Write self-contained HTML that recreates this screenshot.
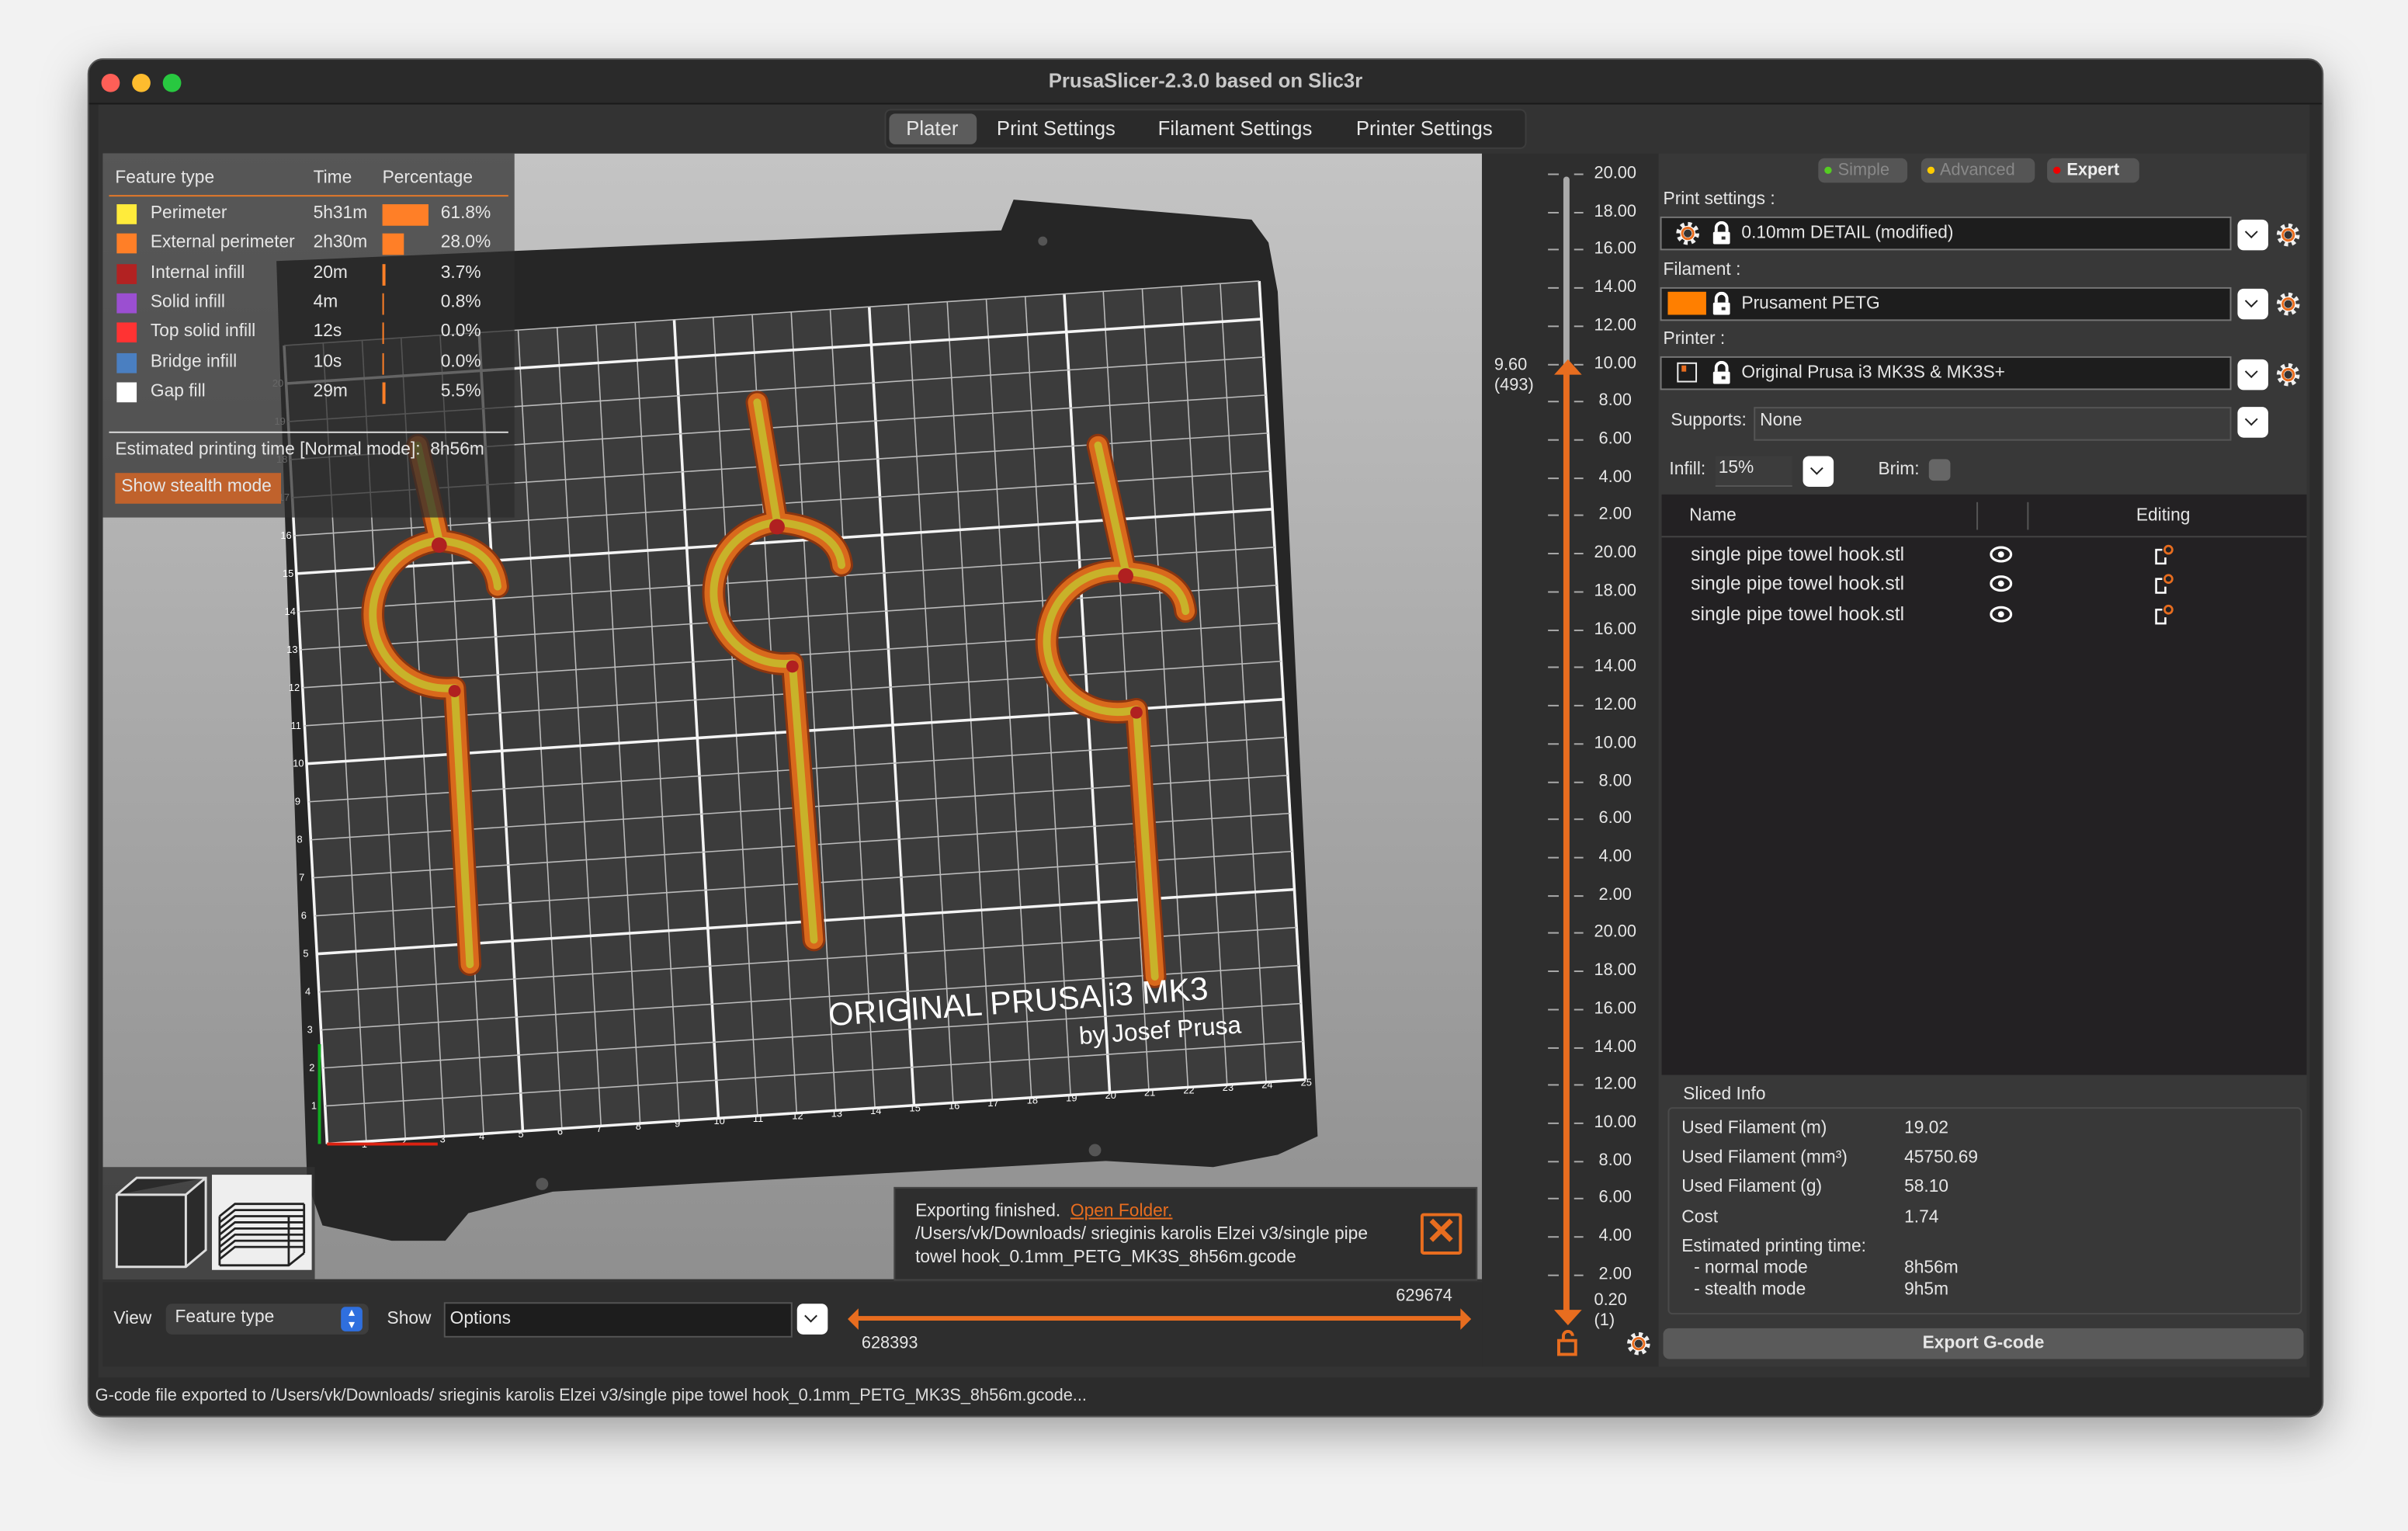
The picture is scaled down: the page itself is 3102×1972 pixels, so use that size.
<!DOCTYPE html>
<html><head><meta charset="utf-8"><style>
html,body{margin:0;padding:0;width:3102px;height:1972px;overflow:hidden;background:#f2f2f2;}
#w{position:absolute;left:0;top:0;width:1568px;height:997px;transform-origin:0 0;transform:scale(1.97832,1.97793);font-family:"Liberation Sans",sans-serif;color:#e6e6e6;font-size:11.5px;}
.a{position:absolute;white-space:nowrap;}
.win{position:absolute;left:57px;top:38px;width:1454px;height:883px;background:#2c2c2c;border-radius:10px;box-shadow:0 10px 30px rgba(0,0,0,.35);overflow:hidden;border:1px solid #555;}
.combo{position:absolute;background:#1d1d1d;border:1px solid #777;height:20px;}
.dd{position:absolute;width:20px;height:20px;background:#fff;border-radius:4px;}
.dd:after{content:"";position:absolute;left:6px;top:5px;width:5px;height:5px;border-right:1.6px solid #222;border-bottom:1.6px solid #222;transform:rotate(45deg);}
.sw{position:absolute;width:13px;height:13px;}
</style></head><body>
<div id="w">
<div class="win">
 <div class="a" style="left:0;top:0;width:1454px;height:28px;background:#2a2a2a;border-bottom:1px solid #1a1a1a"></div>
 <div class="a" style="left:8px;top:9px;width:12px;height:12px;border-radius:50%;background:#fe5f57"></div>
 <div class="a" style="left:28px;top:9px;width:12px;height:12px;border-radius:50%;background:#febc2e"></div>
 <div class="a" style="left:48px;top:9px;width:12px;height:12px;border-radius:50%;background:#28c840"></div>
 <div class="a" style="left:0;width:1454px;top:6px;text-align:center;font-weight:bold;font-size:13px;color:#c8c8c8">PrusaSlicer-2.3.0 based on Slic3r</div>
 <div class="a" style="left:6px;top:29px;width:1440px;height:830px;background:#333;"></div>
 <div class="a" style="left:518px;top:32px;width:416px;height:24px;background:#2a2a2a;border-radius:4px;border:1px solid #3d3d3d"></div>
 <div class="a" style="left:521px;top:35px;width:57px;height:20px;background:#5c5c5c;border-radius:4px"></div>
 <div class="a" style="left:532px;top:37px;font-size:13px">Plater</div>
 <div class="a" style="left:591px;top:37px;font-size:13px">Print Settings</div>
 <div class="a" style="left:696px;top:37px;font-size:13px">Filament Settings</div>
 <div class="a" style="left:825px;top:37px;font-size:13px">Printer Settings</div>
</div>

<div class="a" style="left:67px;top:100px;width:898px;height:733px;background:linear-gradient(#c4c4c4,#8f8f8f);overflow:hidden">
<svg width="898" height="733" viewBox="67 100 898 733" style="position:absolute;left:0;top:0">
 <polygon points="180,170 652,150 660,130 815,143 826,158 832,190 858,740 832,752 790,760 720,756 360,776 305,790 290,808 255,808 210,798 200,770" fill="#262626"/>
 <g id="grid"></g>
 <g id="hooks"></g>
 <text x="540" y="668" fill="#fff" font-size="21" font-family="Liberation Sans" transform="rotate(-4 540 668)">ORIGINAL PRUSA i3 MK3</text>
 <text x="703" y="680" fill="#fff" font-size="16" font-family="Liberation Sans" transform="rotate(-4 703 680)">by Josef Prusa</text>
 <line x1="213" y1="745" x2="285" y2="745" stroke="#d21" stroke-width="2"/>
 <line x1="208" y1="745" x2="208" y2="680" stroke="#1a2" stroke-width="2"/>
 <circle cx="713" cy="749" r="4" fill="#555"/><circle cx="353" cy="771" r="4" fill="#555"/><circle cx="679" cy="157" r="3" fill="#555"/>
</svg>
</div>
<div class="a" style="left:67px;top:100px;width:268px;height:237px;background:rgba(45,45,45,.72)"></div>
<div class="a" style="left:75px;top:110px">Feature type</div>
<div class="a" style="left:204px;top:110px">Time</div>
<div class="a" style="left:249px;top:110px">Percentage</div>
<div class="a" style="left:71px;top:127px;width:260px;height:1px;background:#e67a2a"></div>
<div id="leg"></div>
<div class="a" style="left:71px;top:281px;width:260px;height:1px;background:#ddd"></div>
<div class="a" style="left:75px;top:287px">Estimated printing time [Normal mode]:&nbsp; 8h56m</div>
<div class="a" style="left:75px;top:308px;width:108px;height:20px;background:#c0622c"></div>
<div class="a" style="left:79px;top:311px">Show stealth mode</div>
<div class="a" style="left:67px;top:760px;width:138px;height:73px;background:rgba(50,50,50,.8)"></div>
<svg class="a" style="left:73px;top:764px" width="132" height="64">
 <path d="M3 14 L16 3 L61 3 L61 50 L48 61 L3 61Z M3 14 L48 14 L61 3 M48 14 L48 61" fill="#2b2b2b" stroke="#ddd" stroke-width="1.5"/>
 <rect x="65" y="1" width="65" height="62" fill="#eee"/>
 <g stroke="#222" stroke-width="1.4" fill="none">
  <path d="M70 48 L80 40 L125 40 M70 52 L80 44 L125 44 M70 56 L80 48 L125 48 M70 60 L115 60 L125 52 M70 44 L80 36 L125 36 M70 40 L80 32 L125 32 M70 36 L80 28 L125 28 M70 32 L80 24 L125 24 M70 28 L80 20 L125 20"/>
  <path d="M70 28 L70 60 M115 28 L115 60 M125 20 L125 52"/>
 </g>
</svg>
<div class="a" style="left:582px;top:773px;width:378px;height:59px;background:#2e2e2e;border:1px solid #444"></div>
<div class="a" style="left:596px;top:783px">Exporting finished. &nbsp;<span style="color:#e86d1f;text-decoration:underline">Open Folder.</span></div>
<div class="a" style="left:596px;top:798px">/Users/vk/Downloads/ srieginis karolis Elzei v3/single pipe</div>
<div class="a" style="left:596px;top:813px">towel hook_0.1mm_PETG_MK3S_8h56m.gcode</div>
<div class="a" style="left:925px;top:790px;width:23px;height:23px;border:2px solid #e86d1f;border-radius:2px;color:#e86d1f;font-size:24px;line-height:22px;text-align:center;font-weight:bold">✕</div>

<div class="a" style="left:965px;top:100px;width:115px;height:790px;background:#2e2e2e"></div>
<div class="a" style="left:1018px;top:115px;width:4px;height:125px;background:#aaa;border-radius:2px"></div>
<div class="a" style="left:1018px;top:240px;width:4px;height:616px;background:#e86d1f;border-radius:2px"></div>
<svg class="a" style="left:1010px;top:232px" width="22" height="16"><path d="M2 12 L11 2 L20 12Z" fill="#e86d1f"/></svg>
<svg class="a" style="left:1010px;top:850px" width="22" height="16"><path d="M2 3 L11 13 L20 3Z" fill="#e86d1f"/></svg>
<div class="a" style="left:973px;top:232px;font-size:11px">9.60</div>
<div class="a" style="left:973px;top:245px;font-size:11px">(493)</div>
<div id="vs"></div>
<div class="a" style="left:1038px;top:841px;font-size:11px">0.20</div>
<div class="a" style="left:1038px;top:854px;font-size:11px">(1)</div>
<svg class="a" style="left:1013px;top:866px" width="16" height="17"><rect x="2" y="7" width="11" height="9" fill="none" stroke="#e86d1f" stroke-width="2"/><path d="M5 7 V4 a3 3 0 0 1 6 0" fill="none" stroke="#e86d1f" stroke-width="2"/></svg>
<div class="a gear" style="left:1059px;top:867px"></div>

<div class="a" style="left:67px;top:835px;width:898px;height:55px;background:#2e2e2e"></div>
<div class="a" style="left:74px;top:853px">View</div>
<div class="a" style="left:108px;top:849px;width:132px;height:20px;background:#3e3e3e;border-radius:4px"></div>
<div class="a" style="left:114px;top:852px">Feature type</div>
<div class="a" style="left:222px;top:851px;width:14px;height:16px;background:#2f6fde;border-radius:3px;color:#fff;font-size:8px;text-align:center;line-height:8px">▴<br>▾</div>
<div class="a" style="left:252px;top:853px">Show</div>
<div class="a" style="left:289px;top:848px;width:225px;height:21px;background:#1d1d1d;border:1px solid #555"></div>
<div class="a" style="left:293px;top:853px">Options</div>
<div class="dd" style="left:519px;top:849px"></div>
<div class="a" style="left:556px;top:857px;width:400px;height:3px;background:#e86d1f"></div>
<svg class="a" style="left:550px;top:851px" width="410" height="16"><path d="M2 8 L9 1 V15Z M408 8 L401 1 V15Z" fill="#e86d1f"/></svg>
<div class="a" style="left:909px;top:838px;font-size:11px">629674</div>
<div class="a" style="left:561px;top:869px;font-size:11px">628393</div>

<div class="a" style="left:1080px;top:100px;width:422px;height:790px;background:#383838"></div>
<div class="a" style="left:1184px;top:103px;width:58px;height:16px;background:#555;border-radius:4px;color:#888;font-size:11px;line-height:16px">&nbsp;<span style="color:#5c2">●</span> Simple</div>
<div class="a" style="left:1251px;top:103px;width:74px;height:16px;background:#555;border-radius:4px;color:#888;font-size:11px;line-height:16px">&nbsp;<span style="color:#fc0">●</span> Advanced</div>
<div class="a" style="left:1333px;top:103px;width:60px;height:16px;background:#555;border-radius:4px;color:#eee;font-weight:bold;font-size:11px;line-height:16px">&nbsp;<span style="color:#e00">●</span> Expert</div>
<div class="a" style="left:1083px;top:124px">Print settings :</div>
<div class="combo" style="left:1081px;top:141px;width:370px"></div>
<div class="a gear" style="left:1091px;top:144px"></div>
<div class="a lock" style="left:1114px;top:144px"></div>
<div class="a" style="left:1134px;top:146px">0.10mm DETAIL (modified)</div>
<div class="dd" style="left:1457px;top:143px"></div><div class="a gear" style="left:1482px;top:145px"></div>
<div class="a" style="left:1083px;top:170px">Filament :</div>
<div class="combo" style="left:1081px;top:187px;width:370px"></div>
<div class="a" style="left:1086px;top:190px;width:25px;height:15px;background:#ff7f00"></div>
<div class="a lock" style="left:1114px;top:190px"></div>
<div class="a" style="left:1134px;top:192px">Prusament PETG</div>
<div class="dd" style="left:1457px;top:188px"></div><div class="a gear" style="left:1482px;top:190px"></div>
<div class="a" style="left:1083px;top:215px">Printer :</div>
<div class="combo" style="left:1081px;top:232px;width:370px"></div>
<div class="a" style="left:1092px;top:236px;width:13px;height:13px;border:1.5px solid #eee;box-sizing:border-box"></div>
<div class="a" style="left:1095px;top:238px;width:3px;height:4px;background:#e86d1f"></div>
<div class="a lock" style="left:1114px;top:235px"></div>
<div class="a" style="left:1134px;top:237px">Original Prusa i3 MK3S &amp; MK3S+</div>
<div class="dd" style="left:1457px;top:234px"></div><div class="a gear" style="left:1482px;top:236px"></div>
<div class="a" style="left:1088px;top:268px">Supports:</div>
<div class="a" style="left:1142px;top:265px;width:309px;height:20px;background:#3c3c3c;border:1px solid #555"></div>
<div class="a" style="left:1146px;top:268px">None</div>
<div class="dd" style="left:1457px;top:265px"></div>
<div class="a" style="left:1087px;top:300px">Infill:</div>
<div class="a" style="left:1117px;top:297px;width:50px;height:19px;background:#3c3c3c;border-bottom:1px solid #555"></div>
<div class="a" style="left:1119px;top:299px">15%</div>
<div class="dd" style="left:1174px;top:297px"></div>
<div class="a" style="left:1223px;top:300px">Brim:</div>
<div class="a" style="left:1256px;top:299px;width:14px;height:14px;background:#666;border-radius:3px"></div>
<div class="a" style="left:1082px;top:322px;width:420px;height:378px;background:#232123"></div>
<div class="a" style="left:1100px;top:330px">Name</div>
<div class="a" style="left:1287px;top:327px;width:1px;height:18px;background:#555"></div>
<div class="a" style="left:1320px;top:327px;width:1px;height:18px;background:#555"></div>
<div class="a" style="left:1391px;top:330px">Editing</div>
<div class="a" style="left:1082px;top:349px;width:420px;height:1px;background:#444"></div>
<div id="rows"></div>
<div class="a" style="left:1096px;top:707px">Sliced Info</div>
<div class="a" style="left:1086px;top:721px;width:411px;height:133px;border:1px solid #4a4a4a;border-radius:3px"></div>
<div class="a" style="left:1095px;top:729px">Used Filament (m)</div><div class="a" style="left:1240px;top:729px">19.02</div>
<div class="a" style="left:1095px;top:748px">Used Filament (mm³)</div><div class="a" style="left:1240px;top:748px">45750.69</div>
<div class="a" style="left:1095px;top:767px">Used Filament (g)</div><div class="a" style="left:1240px;top:767px">58.10</div>
<div class="a" style="left:1095px;top:787px">Cost</div><div class="a" style="left:1240px;top:787px">1.74</div>
<div class="a" style="left:1095px;top:806px">Estimated printing time:</div>
<div class="a" style="left:1103px;top:820px">- normal mode</div><div class="a" style="left:1240px;top:820px">8h56m</div>
<div class="a" style="left:1103px;top:834px">- stealth mode</div><div class="a" style="left:1240px;top:834px">9h5m</div>
<div class="a" style="left:1083px;top:865px;width:417px;height:20px;background:#5a5a5a;border-radius:4px;text-align:center;line-height:20px;font-weight:bold">Export G-code</div>
<div class="a" style="left:58px;top:897px;width:1452px;height:23px;background:#2c2c2c;border-radius:0 0 10px 10px"></div>
<div class="a" style="left:62px;top:903px;font-size:11px;color:#ddd">G-code file exported to /Users/vk/Downloads/ srieginis karolis Elzei v3/single pipe towel hook_0.1mm_PETG_MK3S_8h56m.gcode...</div>
</div>
<script>
function P(u,v){var TL=[185,225],TR=[820,183],BR=[850,703],BL=[213,745];
var x=(1-u)*(1-v)*TL[0]+u*(1-v)*TR[0]+u*v*BR[0]+(1-u)*v*BL[0];
var y=(1-u)*(1-v)*TL[1]+u*(1-v)*TR[1]+u*v*BR[1]+(1-u)*v*BL[1];return [x,y];}
var g=document.getElementById('grid'),s='';
s+='<polygon points="185,225 820,183 850,703 213,745" fill="#3c3c3c"/>';
for(var i=0;i<=25;i++){var t=i/25,a=P(t,0),b=P(t,1);var w=(i%5==0)?1.8:0.8,col=(i%5==0)?'#f4f4f4':'#bbb';
s+='<line x1="'+a[0]+'" y1="'+a[1]+'" x2="'+b[0]+'" y2="'+b[1]+'" stroke="'+col+'" stroke-width="'+w+'"/>';
if(i>0){var q=P(t,1);s+='<text x="'+(q[0]-3)+'" y="'+(q[1]+4)+'" font-size="6.5" fill="#fff" font-family="Liberation Sans">'+i+'</text>';}}
for(var j=0;j<=21;j++){var t=j/21,c=P(0,1-t),d=P(1,1-t);var w=(j%5==0)?1.8:0.8,col=(j%5==0)?'#f4f4f4':'#bbb';
s+='<line x1="'+c[0]+'" y1="'+c[1]+'" x2="'+d[0]+'" y2="'+d[1]+'" stroke="'+col+'" stroke-width="'+w+'"/>';
if(j>0&&j<21){s+='<text x="'+(c[0]-9)+'" y="'+(c[1]+2)+'" font-size="6.5" fill="#fff" font-family="Liberation Sans">'+j+'</text>';}}
g.innerHTML=s;
function hook(top,f,jn,tip,bot){var d='M'+top[0]+' '+top[1]+' L'+f[0]+' '+f[1]+' A 46 46 0 1 0 '+jn[0]+' '+jn[1]+' L'+bot[0]+' '+bot[1]+' M'+f[0]+' '+f[1]+' C'+(f[0]+22)+' '+(f[1]+2)+' '+(tip[0]-2)+' '+(tip[1]-18)+' '+tip[0]+' '+tip[1];
return '<path d="'+d+'" fill="none" stroke="#8a3510" stroke-width="15" stroke-linecap="round" stroke-linejoin="round"/><path d="'+d+'" fill="none" stroke="#d9691c" stroke-width="12" stroke-linecap="round" stroke-linejoin="round"/><path d="'+d+'" fill="none" stroke="#c8b22a" stroke-width="5" stroke-linecap="round" stroke-linejoin="round"/><circle cx="'+f[0]+'" cy="'+(f[1]+3)+'" r="5" fill="#b02020"/><circle cx="'+jn[0]+'" cy="'+(jn[1]+2)+'" r="4" fill="#b02020"/>';}
document.getElementById('hooks').innerHTML=hook([272,290],[286,352],[296,448],[324,382],[306,628])+hook([493,262],[506,340],[516,432],[548,368],[530,612])+hook([715,290],[733,372],[740,462],[772,398],[752,636]);
var L=[['#ffeb3b','Perimeter','5h31m',30,'61.8%'],['#ff7f27','External perimeter','2h30m',14,'28.0%'],['#b22222','Internal infill','20m',2,'3.7%'],['#9b4fd1','Solid infill','4m',1,'0.8%'],['#f33','Top solid infill','12s',1,'0.0%'],['#4a7fc1','Bridge infill','10s',1,'0.0%'],['#fff','Gap fill','29m',2,'5.5%']];
var h='';L.forEach(function(r,i){var y=133+i*19.3;h+='<div class="sw" style="left:76px;top:'+y+'px;background:'+r[0]+'"></div><div class="a" style="left:98px;top:'+y+'px">'+r[1]+'</div><div class="a" style="left:204px;top:'+y+'px">'+r[2]+'</div><div class="a" style="left:249px;top:'+(y)+'px;width:'+r[3]+'px;height:14px;background:#ff7f27"></div><div class="a" style="left:287px;top:'+y+'px">'+r[4]+'</div>';});
document.getElementById('leg').innerHTML=h;
var v='';for(var k=0;k<30;k++){var y=113+k*24.72;var val=(20-2*(k%10)).toFixed(2);v+='<div class="a" style="left:1038px;top:'+(y-6)+'px;font-size:11px">'+(val.length<5?'&nbsp;':'')+val+'</div><div class="a" style="left:1008px;top:'+y+'px;width:7px;height:1px;background:#aaa"></div><div class="a" style="left:1025px;top:'+y+'px;width:6px;height:1px;background:#aaa"></div>';}
document.getElementById('vs').innerHTML=v;
var rr='';for(var k=0;k<3;k++){var y=354+k*19.3;rr+='<div class="a" style="left:1101px;top:'+y+'px;font-size:12.5px">single pipe towel hook.stl</div><svg class="a" style="left:1295px;top:'+(y+1)+'px" width="16" height="12"><ellipse cx="8" cy="6" rx="6.5" ry="4.5" fill="none" stroke="#fff" stroke-width="1.6"/><circle cx="8" cy="6" r="2" fill="#fff"/></svg><svg class="a" style="left:1402px;top:'+(y)+'px" width="14" height="14"><path d="M6 4 H2 V13 H8 V9" fill="none" stroke="#fff" stroke-width="1.3"/><circle cx="10" cy="4" r="2.5" fill="none" stroke="#e86d1f" stroke-width="1.4"/></svg>';}
document.getElementById('rows').innerHTML=rr;
var gs='<svg width="16" height="16"><circle cx="8" cy="8" r="6" fill="none" stroke="#eee" stroke-width="3" stroke-dasharray="2.4 2.3"/><circle cx="8" cy="8" r="5" fill="#fff"/><circle cx="8" cy="8" r="3.6" fill="none" stroke="#e86d1f" stroke-width="1.5"/><circle cx="8" cy="8" r="2.6" fill="#333"/></svg>';
document.querySelectorAll('.gear').forEach(function(e){e.innerHTML=gs;});
var ls='<svg width="14" height="16"><path d="M3.5 7 V4.5 a3.5 3.5 0 0 1 7 0 V7" fill="none" stroke="#fff" stroke-width="2"/><rect x="1.5" y="7" width="11" height="8" rx="1" fill="#fff"/><rect x="7" y="10" width="2.5" height="2" fill="#333"/></svg>';
document.querySelectorAll('.lock').forEach(function(e){e.innerHTML=ls;});
</script>
</body></html>
